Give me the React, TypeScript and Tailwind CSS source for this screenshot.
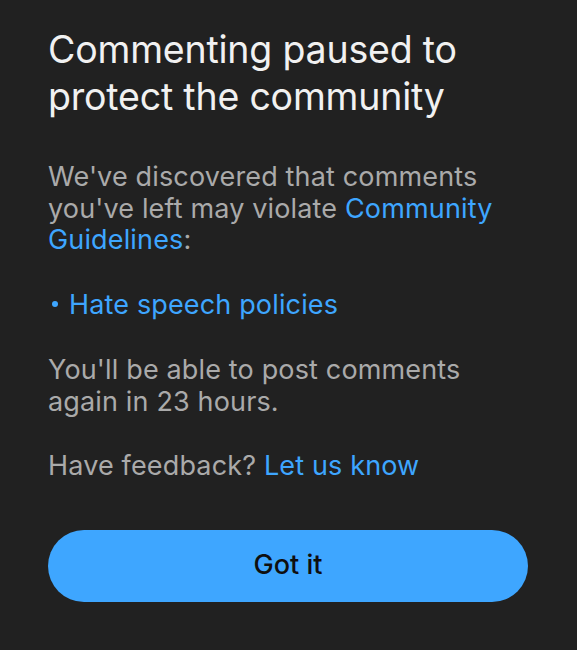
import React from "react";

export default function App() {
  return (
    <div
      className="w-[577px] h-[650px] bg-[#212121] overflow-hidden"
      style={{ fontFamily: "Inter, 'Noto Sans', sans-serif" }}
    >
      <div className="pl-[48px] pr-[30px] pt-[26px]">
        <h1 className="text-[37.5px] leading-[47px] text-[#f1f1f1] tracking-[-0.2px]">
          Commenting paused to
          <br />
          protect the community
        </h1>
        <div className="mt-[41px] text-[27px] leading-[31.5px] tracking-[0.15px] text-[#aaaaaa]">
          <p>
            We've discovered that comments
            <br />
            you've left may violate <span className="text-[#3ea6ff]">Community</span>
            <br />
            <span className="text-[#3ea6ff]">Guidelines</span>:
          </p>
          <p className="mt-[33px] flex items-center text-[#3ea6ff]">
            <span className="w-[6px] h-[6px] rounded-full bg-[#3ea6ff] ml-[4px] mr-[11px]" />
            Hate speech policies
          </p>
          <p className="mt-[34px]">
            You'll be able to post comments
            <br />
            again in 23 hours.
          </p>
          <p className="mt-[33px]">
            Have feedback? <span className="text-[#3ea6ff]">Let us know</span>
          </p>
        </div>
        <button className="mt-[48px] w-[480px] h-[72px] rounded-full bg-[#3ea6ff] text-[#0f0f0f] text-[27px] font-medium flex items-center justify-center">
          Got it
        </button>
      </div>
    </div>
  );
}
